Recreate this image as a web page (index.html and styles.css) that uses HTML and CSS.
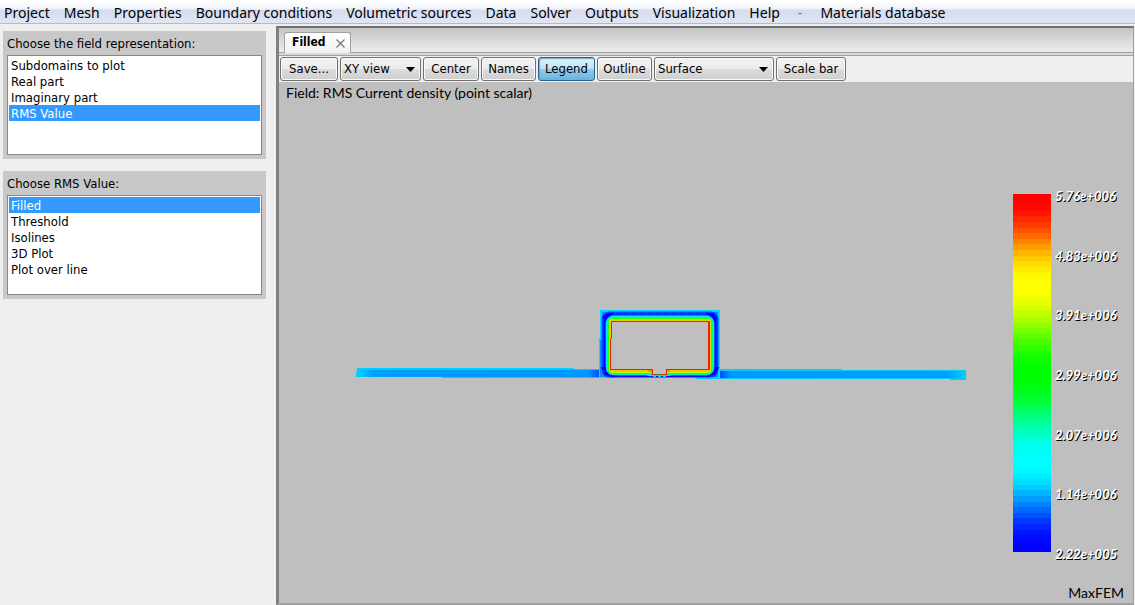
FILE: index.html
```html
<!DOCTYPE html>
<html lang="en">
<head>
<meta charset="utf-8">
<meta name="viewport" content="width=device-width, initial-scale=1">
<title>MaxFEM</title>
<link rel="stylesheet" href="styles.css">
</head>
<body>
<nav class="menubar" aria-label="Main menu">
  <button type="button">Project</button>
  <button type="button">Mesh</button>
  <button type="button">Properties</button>
  <button type="button">Boundary conditions</button>
  <button type="button">Volumetric sources</button>
  <button type="button">Data</button>
  <button type="button">Solver</button>
  <button type="button">Outputs</button>
  <button type="button">Visualization</button>
  <button type="button">Help</button>
  <span class="menu-divider">-</span>
  <button type="button">Materials database</button>
</nav>
<div class="workspace">
  <aside class="sidebar">
    <section class="panel">
      <label for="field">Choose the field representation:</label>
      <select class="list" id="field" size="6">
        <option>Subdomains to plot</option>
        <option>Real part</option>
        <option>Imaginary part</option>
        <option selected>RMS Value</option>
      </select>
    </section>
    <section class="panel">
      <label for="rms">Choose RMS Value:</label>
      <select class="list" id="rms" size="6">
        <option selected>Filled</option>
        <option>Threshold</option>
        <option>Isolines</option>
        <option>3D Plot</option>
        <option>Plot over line</option>
      </select>
    </section>
  </aside>
  <main class="viewer">
    <div class="tabs">
      <div class="tab">
        <span>Filled</span>
        <button class="tab-close" type="button" aria-label="Close tab">
          <svg width="9" height="9" viewBox="0 0 9 9"><path d="M.5 .5l8 8M8.500 .5l-8 8" stroke="#777" stroke-width="1.3"/></svg>
        </button>
      </div>
    </div>
    <div class="toolbar">
      <button class="tool save" type="button">Save...</button>
      <div class="picker view">
        <select class="tool" aria-label="View"><option>XY view</option></select>
        <svg width="9" height="5" viewBox="0 0 9 5"><path d="M0 0h9L4.500 5z"/></svg>
      </div>
      <button class="tool center" type="button">Center</button>
      <button class="tool names" type="button">Names</button>
      <button class="tool legend-toggle active" type="button" aria-pressed="true">Legend</button>
      <button class="tool outline" type="button">Outline</button>
      <div class="picker surface">
        <select class="tool" aria-label="Representation"><option>Surface</option></select>
        <svg width="9" height="5" viewBox="0 0 9 5"><path d="M0 0h9L4.500 5z"/></svg>
      </div>
      <button class="tool scale" type="button">Scale bar</button>
    </div>
    <div class="scene">
      <p class="caption">Field: RMS Current density (point scalar)</p>
      <div class="stage">
        <div class="plot">
          <svg class="model" viewBox="356 310 610 70" role="img" aria-label="RMS current density">
            <defs>
              <linearGradient id="left" x1="0" x2="1"><stop offset="0" stop-color="#00d0ff"/><stop offset=".07" stop-color="#00a0ff"/><stop offset=".94" stop-color="#0098ff"/><stop offset="1" stop-color="#0040ff"/></linearGradient>
              <linearGradient id="right" x1="0" x2="1"><stop offset="0" stop-color="#0030ff"/><stop offset=".05" stop-color="#0098ff"/><stop offset=".93" stop-color="#00a0ff"/><stop offset="1" stop-color="#00d0ff"/></linearGradient>
            </defs>
            <g shape-rendering="crispEdges">
              <path d="M357 368H574V369H602V378H442V377H356V371H357z" fill="#00ccff"/>
              <path d="M357 370H602V377H357z" fill="url(#left)"/>
              <path d="M718 369H842V370H966V380H950V379H696V377H718z" fill="#00ccff"/>
              <path d="M718 371H965V378H718z" fill="url(#right)"/>
              <path d="M600 310H720V378H599V338H600z" fill="#00d8ff"/>
              <path d="M602 312H718V377H600V340H602z" fill="#0090ff"/>
            </g>
            <g fill="none">
              <rect x="603" y="313" width="114" height="63" rx="6" stroke="#0048ff" stroke-width="3"/>
              <rect x="604.500" y="314" width="111" height="62" rx="8" stroke="#0008ff" stroke-width="2"/>
              <path d="M614 313.500H706" stroke="#0050ff" stroke-width="2"/>
              <path d="M616 313.500H704" stroke="#0028ff" stroke-dasharray="5 3"/>
              <path d="M602 318l5-5h7l-9 9zM718 318l-5-5h-7l9 9zM601 367l4 8 9 2-9-10zM719 367l-4 8-9 2 9-10z" fill="#0000ff"/>
              <rect x="606.500" y="315.500" width="107" height="59.500" rx="7" stroke="#0090ff"/>
            </g>
            <rect x="606" y="316" width="108" height="59" rx="7" fill="#00e8ff"/>
            <rect x="607" y="317" width="106" height="57.500" rx="6" fill="#00ff78"/>
            <rect x="608" y="318" width="104" height="56" rx="5" fill="#28ff00"/>
            <rect x="609" y="319" width="102" height="54" rx="3" fill="#b4ff00"/>
            <rect x="609.500" y="320" width="101" height="52" rx="2" fill="#ffc000"/>
            <path d="M646 376q5-2 6-4h14q1 2 6 4z" fill="#00e8c8"/>
            <g shape-rendering="crispEdges">
              <path d="M648 370h5v4h-2v-2h-3zM665 370h5v2h-3v2h-2z" fill="#ff8c00"/>
              <path d="M611 321H710V370H667V375H652V370H610V339H611z" fill="#f02000"/>
              <path d="M612 322H708V369H666V374H653V369H611V339H612z" fill="#bfbfbf"/>
              <path d="M653 374h13v1h-13z" fill="#806000"/>
              <path d="M653 376h3v1h-3zM658 376h3v1h-3zM663 376h3v1h-3z" fill="#00d8ff"/>
            </g>
          </svg>
        </div>
        <div class="legend">
          <div class="colorbar" id="colorbar"></div>
          <ol class="ticks">
            <li>5.76e+006</li><li>4.83e+006</li><li>3.91e+006</li><li>2.99e+006</li><li>2.07e+006</li><li>1.14e+006</li><li>2.22e+005</li>
          </ol>
        </div>
      </div>
      <p class="brand">MaxFEM</p>
    </div>
  </main>
</div>
<script src="colorbar.js"></script>
</body>
</html>
```
FILE: styles.css
```css
* { box-sizing: border-box; }

body {
  margin: 0;
  min-height: 100vh;
  display: flex;
  flex-direction: column;
  background: #efefef;
  color: #000;
  font: 13px/16px "DejaVu Sans Condensed", "DejaVu Sans", sans-serif;
  font-stretch: condensed;
}

button, select { font: inherit; color: inherit; }
p, ol { margin: 0; padding: 0; }

.menubar {
  display: flex;
  gap: 14px;
  height: 24px;
  padding: 0 4px;
  border-bottom: 1px solid #b2bad0;
  background: linear-gradient(#fff, #f4f6fb 35%, #d5dcee 45%, #e0e6f6);
  font: 14px/26px "Noto Sans", sans-serif;
  white-space: nowrap;
}
.menubar button { border: 0; padding: 0; background: none; }
.menu-divider { padding: 0 4px; color: #777; }

.workspace { flex: 1; display: flex; padding-top: 2px; }

.sidebar {
  flex: none;
  width: 276px;
  padding: 5px 10px 0 3px;
  display: flex;
  flex-direction: column;
  gap: 12px;
}
.panel {
  display: flex;
  flex-direction: column;
  gap: 3px;
  padding: 5px 4px 4px;
  background: #c8c8c8;
}
.list {
  height: 100px;
  padding: 1px;
  border: 1px solid #828790;
  border-radius: 0;
  outline: 0;
  background: #fff;
  overflow: hidden;
}
.list option { height: 16px; min-height: 16px; padding: 1px 2px 0; line-height: 16px; }
.list option:checked {
  background: #3399ff linear-gradient(#3399ff, #3399ff);
  -webkit-text-fill-color: #fff;
}

.viewer {
  flex: 1;
  min-width: 0;
  display: flex;
  flex-direction: column;
  margin-right: 1px;
  border: solid #a0a0a0;
  border-width: 2px 1px 2px 3px;
  border-top-color: #707070;
  border-left-color: #808080;
}
.tabs {
  height: 28px;
  padding: 4px 5px 0;
  border-bottom: 1px solid #a0a0a0;
  background: linear-gradient(#c4c4c4, #ededed 24px, #a0a0a0 24px, #a0a0a0 25px, #d8d8d8 25px);
}
.tab {
  display: flex;
  align-items: center;
  justify-content: space-between;
  width: 67px;
  height: 21px;
  padding: 0 5px 2px 7px;
  border: 1px solid #a0a0a0;
  border-bottom: 0;
  border-radius: 3px 3px 0 0;
  background: linear-gradient(#fff, #f2f2f2);
  font-size: 12px;
  font-weight: bold;
}
.tab-close { display: flex; padding: 2px 0 0; border: 0; background: none; }

.toolbar { display: flex; gap: 2px; padding: 1px; background: #efefef; }
.tool {
  height: 24px;
  padding: 0 2px;
  border: 1px solid #707070;
  border-radius: 3px;
  background: linear-gradient(#f2f2f2, #ebebeb 50%, #dcdcdc 50%, #cfcfcf);
  box-shadow: inset 0 0 0 1px #fafafa;
}
.tool.active {
  border-color: #2c628b;
  background: linear-gradient(#dff1fb, #bce4f9 50%, #90cdee 50%, #69b3dc);
  box-shadow: inset 1px 1px 1px #7ba6bf;
}
.picker { display: grid; align-items: center; }
.picker select, .picker svg { grid-area: 1 / 1; }
.picker select { width: 100%; appearance: none; padding: 0 3px; }
.picker svg { justify-self: end; margin-right: 6px; pointer-events: none; }
.save { width: 58px; }
.view { width: 81px; }
.center { width: 56px; }
.names { width: 55px; }
.legend-toggle { width: 57px; }
.outline { width: 55px; }
.surface { width: 120px; }
.scale { width: 70px; }

.scene {
  flex: 1;
  display: flex;
  flex-direction: column;
  background: #bfbfbf;
  font: 14px/16px Lato, sans-serif;
}
.caption { padding: 3px 7px; }
.stage { flex: 1; display: flex; }
.plot { flex: 1; min-width: 0; display: flex; align-items: center; padding: 0 47px 0 77px; }
.model { width: 100%; }
.legend { display: flex; gap: 4px; margin: 90px 18px 33px 0; }
.colorbar { width: 38px; }
.ticks {
  display: flex;
  flex-direction: column;
  justify-content: space-between;
  width: 60px;
  margin: -6px 0 -10px;
  list-style: none;
  color: #fff;
  font-size: 13px;
  font-weight: bold;
  font-style: italic;
  text-shadow: 1px 1px 0 #000;
}
.brand { padding: 0 9px 2px; text-align: right; }
```
FILE: colorbar.js
```js
// Rainbow lookup table, red at the top, with a cosine ramp on each channel.
const BANDS = 64;
const ramp = c => Math.round(127.5 * (1 - Math.cos(c * Math.PI)));
const stops = [];
for (let i = 0; i < BANDS; i++) {
  const h = (i / (BANDS - 1)) * 4;
  const clamp = v => Math.min(1, Math.max(0, v));
  const rgb = [clamp(2 - h), clamp(h < 2 ? h : 4 - h), clamp(h - 2)].map(ramp);
  stops.push(`rgb(${rgb}) ${(i / BANDS) * 100}% ${((i + 1) / BANDS) * 100}%`);
}
document.getElementById("colorbar").style.background = `linear-gradient(${stops})`;
```
